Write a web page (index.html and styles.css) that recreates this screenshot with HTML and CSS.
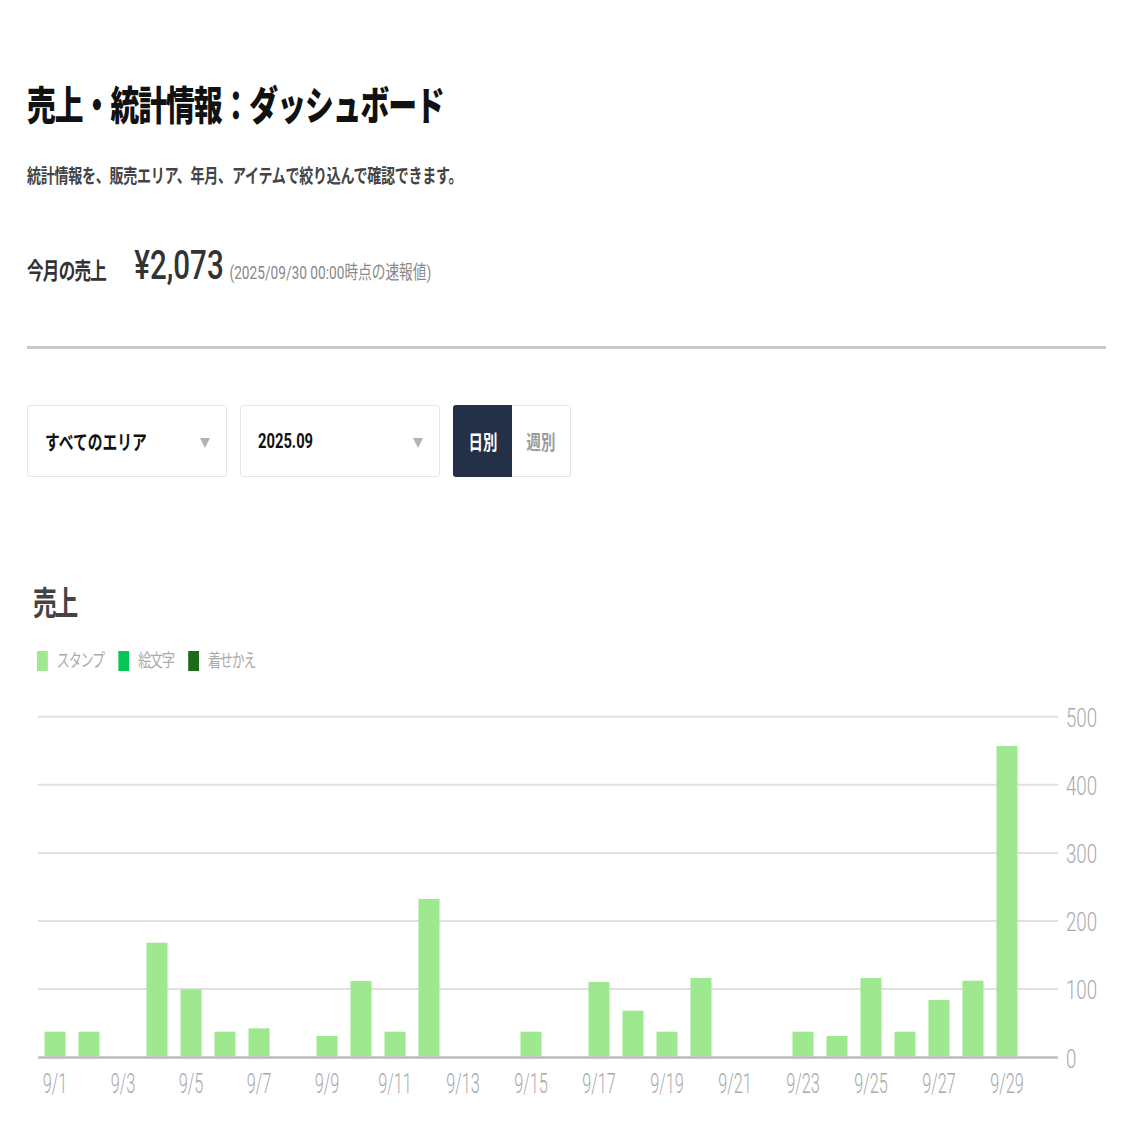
FILE: index.html
```html
<!DOCTYPE html>
<html lang="ja">
<head>
<meta charset="utf-8">
<title>売上・統計情報：ダッシュボード</title>
<link rel="stylesheet" href="styles.css">
</head>
<body>
<div class="page">
  <header class="head">
    <h1 class="title cond">売上・統計情報：ダッシュボード</h1>
    <p class="lead cond">統計情報を、販売エリア、年月、アイテムで絞り込んで確認できます。</p>
    <div class="month cond">
      <span class="month-label">今月の売上</span>
      <span class="month-value">¥2,073</span>
      <span class="month-note">(2025/09/30 00:00時点の速報値)</span>
    </div>
  </header>
  <div class="divider"></div>
  <div class="filters">
    <div class="select"><span class="sel-text">すべてのエリア</span><span class="caret"></span></div>
    <div class="select"><span class="sel-text">2025.09</span><span class="caret"></span></div>
    <div class="toggle">
      <span class="tg on"><span class="tg-text">日別</span></span>
      <span class="tg off"><span class="tg-text">週別</span></span>
    </div>
  </div>
  <section class="chart">
    <h2 class="chart-title cond">売上</h2>
    <ul class="legend cond">
      <li><span class="swatch stamp"></span><span class="legend-text">スタンプ</span></li>
      <li><span class="swatch emoji"></span><span class="legend-text">絵文字</span></li>
      <li><span class="swatch theme"></span><span class="legend-text">着せかえ</span></li>
    </ul>
    <svg class="plot" width="1108.8" height="400" viewBox="0 0 1540 400" preserveAspectRatio="none">
      <g class="grid">
        <line x1="15.3" y1="16.7" x2="1431.9" y2="16.7"/>
        <line x1="15.3" y1="84.8" x2="1431.9" y2="84.8"/>
        <line x1="15.3" y1="152.9" x2="1431.9" y2="152.9"/>
        <line x1="15.3" y1="221" x2="1431.9" y2="221"/>
        <line x1="15.3" y1="289.1" x2="1431.9" y2="289.1"/>
      </g>
      <g class="bars">
        <rect x="24.31" y="331.7" width="29.2" height="24.8"/>
        <rect x="71.53" y="331.7" width="29.2" height="24.8"/>
        <rect x="165.97" y="242.7" width="29.2" height="113.8"/>
        <rect x="213.19" y="289.3" width="29.2" height="67.2"/>
        <rect x="260.41" y="331.7" width="29.2" height="24.8"/>
        <rect x="307.63" y="328.3" width="29.2" height="28.2"/>
        <rect x="402.07" y="336" width="29.2" height="20.5"/>
        <rect x="449.29" y="281" width="29.2" height="75.5"/>
        <rect x="496.51" y="331.7" width="29.2" height="24.8"/>
        <rect x="543.73" y="199" width="29.2" height="157.5"/>
        <rect x="685.39" y="331.7" width="29.2" height="24.8"/>
        <rect x="779.83" y="282" width="29.2" height="74.5"/>
        <rect x="827.05" y="310.7" width="29.2" height="45.8"/>
        <rect x="874.27" y="331.7" width="29.2" height="24.8"/>
        <rect x="921.49" y="278" width="29.2" height="78.5"/>
        <rect x="1063.15" y="331.7" width="29.2" height="24.8"/>
        <rect x="1110.37" y="336" width="29.2" height="20.5"/>
        <rect x="1157.59" y="278" width="29.2" height="78.5"/>
        <rect x="1204.81" y="331.7" width="29.2" height="24.8"/>
        <rect x="1252.03" y="300" width="29.2" height="56.5"/>
        <rect x="1299.25" y="280.7" width="29.2" height="75.8"/>
        <rect x="1346.47" y="46" width="29.2" height="310.5"/>
      </g>
      <line class="axis" x1="15.3" y1="357.5" x2="1431.9" y2="357.5"/>
      <g class="ylabels">
        <text x="1443" y="27">500</text>
        <text x="1443" y="95.1">400</text>
        <text x="1443" y="163.2">300</text>
        <text x="1443" y="231.3">200</text>
        <text x="1443" y="299.4">100</text>
        <text x="1443" y="367.6">0</text>
      </g>
      <g class="xlabels">
        <text transform="translate(38.91 393) scale(0.84 1)">9/1</text>
        <text transform="translate(133.35 393) scale(0.84 1)">9/3</text>
        <text transform="translate(227.79 393) scale(0.84 1)">9/5</text>
        <text transform="translate(322.23 393) scale(0.84 1)">9/7</text>
        <text transform="translate(416.67 393) scale(0.84 1)">9/9</text>
        <text transform="translate(511.11 393) scale(0.84 1)">9/11</text>
        <text transform="translate(605.55 393) scale(0.84 1)">9/13</text>
        <text transform="translate(699.99 393) scale(0.84 1)">9/15</text>
        <text transform="translate(794.43 393) scale(0.84 1)">9/17</text>
        <text transform="translate(888.87 393) scale(0.84 1)">9/19</text>
        <text transform="translate(983.31 393) scale(0.84 1)">9/21</text>
        <text transform="translate(1077.75 393) scale(0.84 1)">9/23</text>
        <text transform="translate(1172.19 393) scale(0.84 1)">9/25</text>
        <text transform="translate(1266.63 393) scale(0.84 1)">9/27</text>
        <text transform="translate(1361.07 393) scale(0.84 1)">9/29</text>
      </g>
    </svg>
  </section>
</div>
</body>
</html>
```

FILE: styles.css
```css
html, body {
  margin: 0;
  padding: 0;
  background: #ffffff;
}

.page {
  box-sizing: border-box;
  width: 1138px;
  padding: 85px 32px 0 27px;
  font-family: Roboto, "Noto Sans CJK JP", sans-serif;
  color: #111;
}

/* the reference renders its type horizontally condensed */
.cond {
  transform: scaleX(0.72);
  transform-origin: 0 50%;
}

.title {
  margin: 0;
  font-size: 40px;
  line-height: 44px;
  font-weight: 900;
  color: #111;
  letter-spacing: -1.4px;
}

.lead {
  margin: 35px 0 0;
  font-size: 19.5px;
  line-height: 26px;
  font-weight: 700;
  color: #444;
  letter-spacing: -0.4px;
}

.month {
  display: flex;
  align-items: baseline;
  margin-top: 51px;
}

.month-label {
  font-size: 23px;
  line-height: 30px;
  font-weight: 700;
  color: #333;
  letter-spacing: -1px;
}

.month-value {
  margin-left: 39px;
  font-size: 41px;
  line-height: 48px;
  font-weight: 500;
  color: #333;
}

.month-note {
  margin-left: 8px;
  font-size: 19px;
  line-height: 26px;
  color: #888;
}

.divider {
  margin-top: 57px;
  height: 3px;
  background: #c5c9cc;
}

.filters {
  display: flex;
  gap: 13px;
  margin-top: 56px;
  height: 72px;
}

.select {
  width: 200px;
  height: 72px;
  box-sizing: border-box;
  border: 1.5px solid #e6e6e6;
  border-radius: 3px;
  display: flex;
  align-items: center;
  justify-content: space-between;
  padding: 0 16px 0 17px;
  font-size: 20.5px;
  font-weight: 700;
  color: #111;
}

.sel-text {
  display: inline-block;
  transform: scaleX(0.72);
  transform-origin: 0 50%;
  white-space: nowrap;
}

.caret {
  width: 0;
  height: 0;
  border-left: 5.5px solid transparent;
  border-right: 5.5px solid transparent;
  border-top: 10px solid #b3b3b3;
  margin-top: 3px;
}

.toggle {
  display: flex;
  height: 72px;
}

.tg {
  width: 59px;
  box-sizing: border-box;
  display: flex;
  align-items: center;
  justify-content: center;
  font-size: 20px;
  font-weight: 700;
}

.tg-text {
  display: inline-block;
  transform: scaleX(0.72);
  white-space: nowrap;
}

.tg.on {
  background: #242f48;
  color: #ffffff;
  border-radius: 3px 0 0 3px;
}

.tg.off {
  border: 1.5px solid #e6e6e6;
  border-left: 0;
  border-radius: 0 3px 3px 0;
  color: #9a9a9a;
}

.chart-title {
  margin: 106px 0 0 6px;
  font-size: 33px;
  line-height: 42px;
  font-weight: 700;
  color: #444;
  letter-spacing: -3px;
}

.legend {
  list-style: none;
  margin: 26px 0 0 10px;
  padding: 0;
  display: flex;
  align-items: center;
  height: 20px;
}

.legend li {
  display: flex;
  align-items: center;
  gap: 12.5px;
  margin-right: 20px;
}

.swatch {
  width: 15px;
  height: 20px;
  display: block;
}

.swatch.stamp { background: #9ee88f; }
.swatch.emoji { background: #06c755; }
.swatch.theme { background: #1d6a1d; }

.legend-text {
  font-size: 18px;
  line-height: 20px;
  color: #aaaaaa;
  letter-spacing: -1.5px;
}

.plot {
  display: block;
  margin-top: 29px;
}

.grid line {
  stroke: #e0e0e0;
  stroke-width: 2;
}

.axis {
  stroke: #bdbdbd;
  stroke-width: 2.5;
}

.bars rect {
  fill: #9ee88f;
}

.ylabels text {
  font-family: Roboto, sans-serif;
  font-weight: 300;
  font-size: 26px;
  fill: #aaaaaa;
}

.xlabels text {
  font-family: Roboto, sans-serif;
  font-weight: 300;
  font-size: 27px;
  fill: #aaaaaa;
  text-anchor: middle;
}
```
